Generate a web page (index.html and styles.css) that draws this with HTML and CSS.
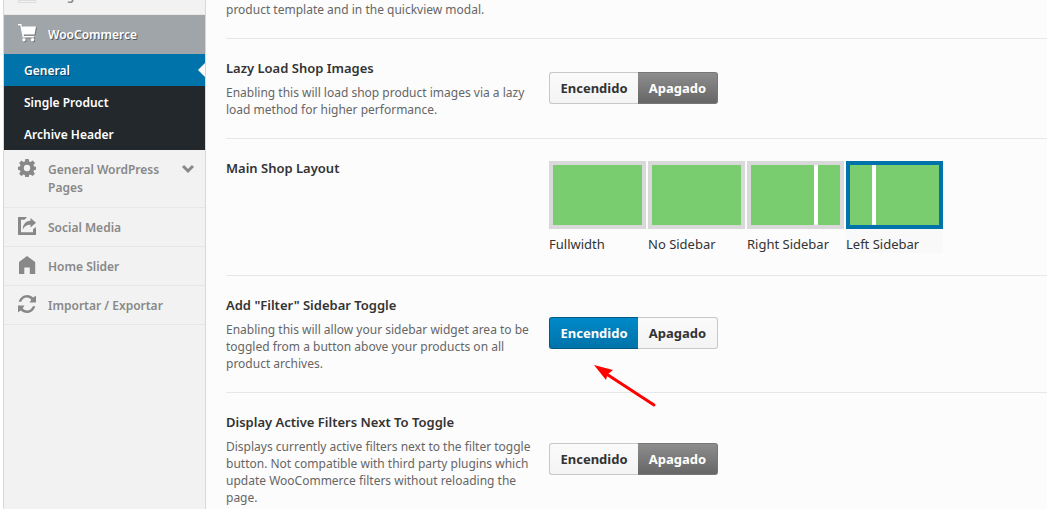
FILE: index.html
```html
<!DOCTYPE html>
<html lang="es">
<head>
<meta charset="utf-8">
<title>WooCommerce – General</title>
<link rel="stylesheet" href="styles.css">
</head>
<body>
<div class="panel">
  <nav class="sidebar">
    <ul class="menu">
      <li class="menu-item">
        <a class="menu-link" href="#">
          <svg class="icon icon-faint" viewBox="0 0 18 18"><path d="M0 1h18v17H0zM1 3v12h16V3zM1 16v1h16v-1z" fill-rule="evenodd"/></svg>
          <span class="menu-text">Blog</span>
        </a>
      </li>
      <li class="menu-item">
        <a class="menu-link menu-link-active" href="#">
          <svg class="icon" viewBox="0 0 18 18"><path d="M0 0h3.300l.9 2.500H18l-1.400 8H5.600l.4 1.500h10.200v1.500H4.700L2.300 1.600H0z"/><circle cx="6" cy="15.800" r="1.700"/><circle cx="14.500" cy="15.800" r="1.700"/></svg>
          <span class="menu-text">WooCommerce</span>
        </a>
        <ul class="submenu">
          <li><a class="submenu-link submenu-link-active" href="#">General</a></li>
          <li><a class="submenu-link" href="#">Single Product</a></li>
          <li><a class="submenu-link" href="#">Archive Header</a></li>
        </ul>
      </li>
      <li class="menu-item">
        <a class="menu-link" href="#">
          <svg class="icon" viewBox="0 0 18 18"><path fill-rule="evenodd" d="M7.300 0h3.400l.5 2.500 1.300.6 2.200-1.500 2.300 2.300-1.500 2.200.6 1.300 1.900.4v2.900l-2 .5-.6 1.400 1.500 2.100-2.300 2.300-2.200-1.500-1.200.6-.5 2.400H7.300l-.5-2.400-1.300-.6L3.400 17l-2.300-2.300 1.400-2.100-.6-1.400-1.900-.5V7.800l2-.4.5-1.300L1.100 3.900l2.300-2.300 2.100 1.500 1.300-.6zM9 5.800a3.200 3.200 0 1 0 0 6.400 3.200 3.200 0 0 0 0-6.400z"/></svg>
          <span class="menu-text">General WordPress Pages</span>
          <svg class="chevron" viewBox="0 0 12 8"><path d="M1 1l5 5 5-5"/></svg>
        </a>
      </li>
      <li class="menu-item">
        <a class="menu-link" href="#">
          <svg class="icon" viewBox="0 0 18 18"><path d="M0 0h9L6.500 2.800H3v12.400h12v-3l3-2.200v8H0z"/><path d="M12.500 1l5.500 4.700-5.500 4.800V7.700C9 7.500 6.500 9 4.800 12.500 4.700 7.500 7.500 4 12.500 3.700z"/></svg>
          <span class="menu-text">Social Media</span>
        </a>
      </li>
      <li class="menu-item">
        <a class="menu-link" href="#">
          <svg class="icon" viewBox="0 0 18 18"><path d="M9 0l8.200 6v12h-5.400v-6.500H6.300V18H1V6z"/></svg>
          <span class="menu-text">Home Slider</span>
        </a>
      </li>
      <li class="menu-item">
        <a class="menu-link" href="#">
          <svg class="icon" viewBox="0 0 18 18"><path d="M.7 6.800C1.800 2.800 5.200 0 9.200 0c2.300 0 4.400.9 5.900 2.400L18 .8v6.700h-6.500l1.800-2.800C10 1 5 2.300 3.200 6.800zM17.300 11.200c-1.100 4-4.500 6.800-8.500 6.800-2.300 0-4.400-.9-5.900-2.400L0 17.200v-6.700h6.500l-1.800 2.800c3.300 3.700 8.300 2.400 10.100-2.100z"/></svg>
          <span class="menu-text">Importar / Exportar</span>
        </a>
      </li>
    </ul>
  </nav>

  <main class="settings">
    <section class="row">
      <div class="info">
        <p class="description">product template and in the quickview modal.</p>
      </div>
    </section>

    <section class="row">
      <div class="info">
        <h2 class="title">Lazy Load Shop Images</h2>
        <p class="description">Enabling this will load shop product images via a lazy load method for higher performance.</p>
      </div>
      <div class="control">
        <div class="switch">
          <button class="option" type="button">Encendido</button>
          <button class="option option-off" type="button">Apagado</button>
        </div>
      </div>
    </section>

    <section class="row">
      <div class="info">
        <h2 class="title">Main Shop Layout</h2>
      </div>
      <div class="control layouts">
        <label class="layout"><input class="thumb" type="radio" name="layout"><span>Fullwidth</span></label>
        <label class="layout"><input class="thumb" type="radio" name="layout"><span>No Sidebar</span></label>
        <label class="layout"><input class="thumb thumb-right" type="radio" name="layout"><span>Right Sidebar</span></label>
        <label class="layout layout-selected"><input class="thumb thumb-left" type="radio" name="layout" checked><span>Left Sidebar</span></label>
      </div>
    </section>

    <section class="row">
      <div class="info">
        <h2 class="title">Add "Filter" Sidebar Toggle</h2>
        <p class="description">Enabling this will allow your sidebar widget area to be toggled from a button above your products on all product archives.</p>
      </div>
      <div class="control">
        <div class="switch">
          <button class="option option-on" type="button">Encendido</button>
          <button class="option" type="button">Apagado</button>
          <svg class="pointer" viewBox="0 0 64 44"><path class="pointer-line" d="M60 40L14 10"/><path d="M0 0l19 5-5.500 4.500L12 15z"/></svg>
        </div>
      </div>
    </section>

    <section class="row">
      <div class="info">
        <h2 class="title">Display Active Filters Next To Toggle</h2>
        <p class="description">Displays currently active filters next to the filter toggle button. Not compatible with third party plugins which update WooCommerce filters without reloading the page.</p>
      </div>
      <div class="control">
        <div class="switch">
          <button class="option" type="button">Encendido</button>
          <button class="option option-off" type="button">Apagado</button>
        </div>
      </div>
    </section>
  </main>
</div>
</body>
</html>
```
FILE: styles.css
```css
* {
  box-sizing: border-box;
}

body {
  margin: 0;
  background: #fff;
  color: #333;
  font-family: "Noto Sans", "Open Sans", sans-serif;
  font-size: 12px;
}

.panel {
  display: flex;
  height: 100vh;
  margin-left: 3px;
  overflow: hidden;
  background: #fcfcfc;
}

/* Sidebar */
.sidebar {
  flex: 0 0 203px;
  border: 1px solid #d8d8d8;
  border-width: 0 1px;
  background: #f2f2f2;
}

.menu,
.submenu {
  margin: 0;
  padding: 0;
  list-style: none;
}

.menu {
  margin-top: -24px;
}

.menu-link {
  display: flex;
  align-items: flex-start;
  gap: 12px;
  padding: 9px 11px 9px 14px;
  border-bottom: 1px solid #e7e7e7;
  color: #888;
  font-weight: 600;
  line-height: 18px;
  text-decoration: none;
}

.menu-text {
  flex: 1;
  padding-top: 2px;
}

.icon {
  flex: none;
  width: 18px;
  height: 18px;
  fill: #888;
}

.icon-faint {
  fill: #ddd;
}

.chevron {
  flex: none;
  width: 12px;
  height: 20px;
  margin-bottom: 19px;
  fill: none;
  stroke: #888;
  stroke-width: 3;
}

.menu-link-active {
  border-bottom-color: #a0a5aa;
  background: #a0a5aa;
  color: #fff;
  text-shadow: 1px 1px #555;
}

.menu-link-active .icon {
  fill: #fff;
  filter: drop-shadow(1px 1px 0 #777);
}

.submenu {
  background: #23282d;
}

.submenu-link {
  display: block;
  padding: 8px 20px 6px;
  color: #fff;
  font-weight: 600;
  line-height: 18px;
  text-decoration: none;
}

.submenu-link-active {
  position: relative;
  background: #0073aa;
  text-shadow: 1px 1px #13405a;
}

.submenu-link-active::after {
  position: absolute;
  top: 9px;
  right: 0;
  border: 7px solid transparent;
  border-right-color: #fcfcfc;
  border-left-width: 0;
  content: "";
}

/* Settings */
.settings {
  flex: 1;
  min-width: 0;
  padding-left: 20px;
}

.row {
  display: grid;
  grid-template-columns: 313px 1fr;
  gap: 10px;
  padding: 20px 0;
  border-bottom: 1px solid #e7e7e7;
}

.row:first-child {
  padding-top: 1px;
}

.row:last-child {
  border-bottom: 0;
}

.title {
  margin: 0;
  font-size: 13px;
  font-weight: 600;
  line-height: 18px;
}

.description {
  margin: 0;
  color: #666;
  line-height: 17px;
}

.title + .description {
  margin-top: 7px;
}

.control {
  align-self: center;
}

.switch {
  display: flex;
  position: relative;
  width: max-content;
  margin-bottom: 2px;
}

.option {
  min-width: 80px;
  height: 32px;
  padding: 0 10px;
  border: 1px solid #c8c8c8;
  border-radius: 0 3px 3px 0;
  background: linear-gradient(#fafafa, #f4f4f4);
  color: #333;
  font: 700 13px/20px "Noto Sans", "Open Sans", sans-serif;
}

.option:first-child {
  min-width: 89px;
  border-right: 0;
  border-radius: 3px 0 0 3px;
}

.option:nth-child(2) {
  border-left: 0;
}

.switch .option-on {
  border-color: #005a86;
  background: linear-gradient(#0089c9, #0073aa);
  color: #fff;
}

.switch .option-off {
  border-color: #777;
  background: linear-gradient(#8d8d8d, #666);
  color: #fff;
}

.layouts {
  display: flex;
  gap: 2px;
  margin: 2px 0;
}

.layout {
  display: flex;
  flex-direction: column;
  gap: 6px;
  font-size: 13px;
  line-height: 18px;
}

.layout-selected {
  background: #f9f9f9;
}

.thumb {
  appearance: none;
  width: 97px;
  height: 68px;
  margin: 0;
  border: 4px solid #d9d9d9;
  background: #79cd6f;
}

.thumb:checked {
  border-color: #0073aa;
}

.thumb-right {
  background: linear-gradient(90deg, #79cd6f 63px, #fff 63px 67px, #79cd6f 67px);
}

.thumb-left {
  background: linear-gradient(90deg, #79cd6f 22px, #fff 22px 26px, #79cd6f 26px);
}

/* Red arrow laid over the form */
.pointer {
  position: absolute;
  top: 48px;
  left: 45px;
  width: 64px;
  height: 44px;
  fill: #f00;
}

.pointer-line {
  stroke: #f00;
  stroke-width: 3;
  stroke-linecap: round;
}
```
